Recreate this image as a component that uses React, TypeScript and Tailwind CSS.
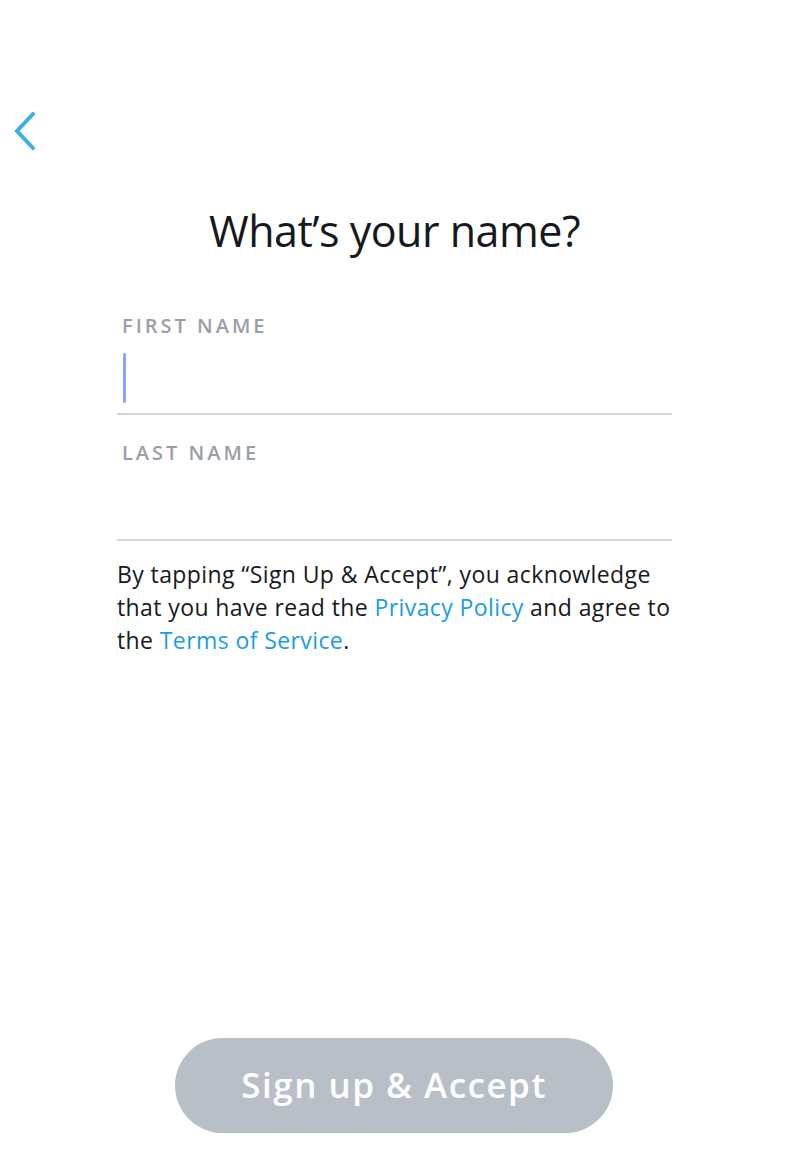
export default function App() {
  return (
    <div
      className="relative w-[808px] h-[1157px] bg-white overflow-hidden"
      style={{ fontFamily: "'Open Sans', Lato, sans-serif" }}
    >
      <div className="pt-[112px] pl-[13px]">
        <button className="block" aria-label="Back">
          <svg width="24" height="38" viewBox="0 0 24 38" fill="none">
            <path
              d="M20 2 L4 19 L20 36"
              stroke="#3bb0e6"
              strokeWidth="4"
              strokeLinecap="round"
              strokeLinejoin="miter"
            />
          </svg>
        </button>
      </div>

      <div className="ml-[117px] w-[555px] flex flex-col">
        <h1 className="mt-[55px] text-center text-[43px] leading-[52px] text-[#16191c] tracking-[-0.5px]">
          What’s your name?
        </h1>

        <label className="mt-[57px] text-[20px] leading-[24px] font-semibold tracking-[3px] text-[#9a9ea6] pl-[5px]">
          FIRST NAME
        </label>
        <div className="h-[77px] border-b-2 border-[#d2d6db] flex items-start pl-[6px] pt-[15px]">
          <div className="w-[3px] h-[50px] rounded-full bg-[#8ba3ff]" />
        </div>

        <label className="mt-[26px] text-[20px] leading-[24px] font-semibold tracking-[3px] text-[#9a9ea6] pl-[5px]">
          LAST NAME
        </label>
        <div className="h-[76px] border-b-2 border-[#d2d6db]" />

        <p className="mt-[17px] text-[23px] leading-[33px] text-[#16191c] tracking-[0.4px] whitespace-nowrap">
          By tapping “Sign Up &amp; Accept”, you acknowledge
          <br />
          that you have read the{" "}
          <a className="text-[#1a9be6]">Privacy Policy</a> and agree to
          <br />
          the <a className="text-[#1a9be6]">Terms of Service</a>.
        </p>
      </div>

      <div className="absolute left-[175px] top-[1038px] w-[438px] h-[95px] rounded-full bg-[#b9bfc7] flex items-center justify-center">
        <span className="text-white text-[35px] font-semibold tracking-[1.5px]">
          Sign up &amp; Accept
        </span>
      </div>
    </div>
  );
}
